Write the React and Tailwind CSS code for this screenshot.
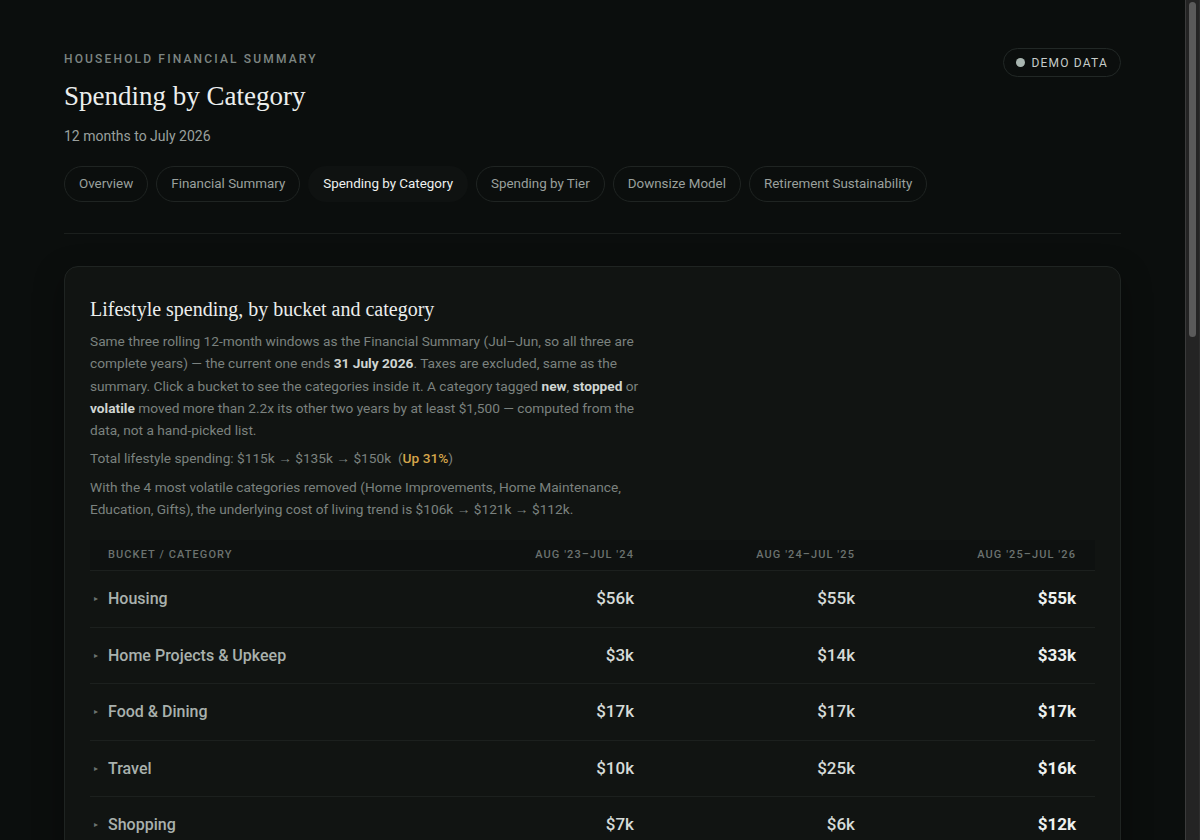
import { useState } from "react";

const tabs = [
  "Overview",
  "Financial Summary",
  "Spending by Category",
  "Spending by Tier",
  "Downsize Model",
  "Retirement Sustainability",
];

const buckets = [
  { name: "Housing", values: ["$56k", "$55k", "$55k"] },
  { name: "Home Projects & Upkeep", values: ["$3k", "$14k", "$33k"] },
  { name: "Food & Dining", values: ["$17k", "$17k", "$17k"] },
  { name: "Travel", values: ["$10k", "$25k", "$16k"] },
  { name: "Shopping", values: ["$7k", "$6k", "$12k"] },
  { name: "Transport", values: ["$8k", "$7k", "$7k"] },
  { name: "Health & Wellness", values: ["$5k", "$4k", "$3k"] },
  { name: "Kids & Education", values: ["$4k", "$3k", "$2k"] },
  { name: "Gifts & Giving", values: ["$2k", "$2k", "$3k"] },
  { name: "Subscriptions", values: ["$1k", "$1k", "$1k"] },
  { name: "Personal Care", values: ["$1k", "$1k", "$1k"] },
  { name: "Other", values: ["$1k", "$0k", "$0k"] },
];

const periods = ["Aug '23–Jul '24", "Aug '24–Jul '25", "Aug '25–Jul '26"];

function BucketRow({ bucket }) {
  const [open, setOpen] = useState(false);
  return (
    <div
      className="grid grid-cols-[1fr_221px_221px_221px] items-center h-[56.5px] border-t border-[#1c201e] cursor-pointer"
      onClick={() => setOpen(!open)}
    >
      <div className="flex items-center gap-2 pl-1">
        <span className="text-[8px] text-[#6b726f] w-[6px]">{open ? "▾" : "▸"}</span>
        <span className="text-[16px] font-medium text-[#a9b1ad]">{bucket.name}</span>
      </div>
      {bucket.values.map((v, i) => (
        <div
          key={i}
          className={
            i === 2
              ? "text-right pr-[19px] text-[17px] font-bold text-[#eef1ef]"
              : "text-right pr-[19px] text-[17px] font-medium text-[#d6dbd8]"
          }
        >
          {v}
        </div>
      ))}
    </div>
  );
}

export default function App() {
  const [active, setActive] = useState("Spending by Category");

  return (
    <div
      className="h-screen flex bg-[#0b0e0d] text-[#9aa09d]"
      style={{ fontFamily: "Roboto, 'Noto Sans', sans-serif" }}
    >
      <main className="flex-1 overflow-y-auto">
        <div className="px-16 pt-[50px] pb-24">
          <header className="flex justify-between items-start">
            <div>
              <div className="text-[12px] tracking-[0.18em] font-medium text-[#7d8582]">
                HOUSEHOLD FINANCIAL SUMMARY
              </div>
              <h1 className="mt-[10px] text-[27px] leading-[36px] text-[#eceeed] font-['Liberation_Serif',serif]">
                Spending by Category
              </h1>
              <div className="mt-[12px] text-[14px] text-[#9aa09d]">12 months to July 2026</div>
            </div>
            <div className="mt-[-2px] flex items-center gap-[6px] h-[29px] px-3 rounded-full border border-[#222826] text-[12px] tracking-[0.1em] text-[#c6ccc9]">
              <span className="w-[9px] h-[9px] rounded-full bg-[#a8b5b0]"></span>
              DEMO DATA
            </div>
          </header>

          <nav className="mt-[19px] flex gap-2">
            {tabs.map((t) =>
              t === active ? (
                <button
                  key={t}
                  className="h-[36px] px-[14px] rounded-full bg-[#0f1211] border border-transparent text-[13.4px] text-[#eef1ef]"
                >
                  {t}
                </button>
              ) : (
                <button
                  key={t}
                  onClick={() => setActive(t)}
                  className="h-[36px] px-[14px] rounded-full border border-[#1f2422] text-[13.4px] text-[#9aa09d]"
                >
                  {t}
                </button>
              ),
            )}
          </nav>

          <div className="mt-[31px] border-t border-[#1b1f1d]"></div>

          <section className="mt-[32px] rounded-[14px] border border-[#1f2422] bg-[#111412] px-[25px] pt-[28px] pb-[26px] shadow-[0_10px_30px_rgba(0,0,0,0.35)]">
            <h2 className="text-[20px] leading-[28px] text-[#eceeed] font-['Liberation_Serif',serif]">
              Lifestyle spending, by bucket and category
            </h2>
            <p className="mt-[7px] max-w-[570px] text-[13.7px] leading-[22.3px] text-[#7b827f]">
              Same three rolling 12-month windows as the Financial Summary (Jul–Jun, so all three are
              complete years) — the current one ends{" "}
              <b className="font-bold text-[#cfd4d1]">31 July 2026</b>. Taxes are excluded, same as the
              summary. Click a bucket to see the categories inside it. A category tagged{" "}
              <b className="font-bold text-[#cfd4d1]">new</b>,{" "}
              <b className="font-bold text-[#cfd4d1]">stopped</b> or{" "}
              <b className="font-bold text-[#cfd4d1]">volatile</b> moved more than 2.2x its other two
              years by at least $1,500 — computed from the data, not a hand-picked list.
            </p>
            <p className="mt-[6px] text-[13.7px] leading-[22.3px] text-[#7b827f]">
              Total lifestyle spending: $115k → $135k → $150k&nbsp; (
              <span className="font-medium text-[#d4a54a]">Up 31%</span>)
            </p>
            <p className="mt-[6px] max-w-[570px] text-[13.7px] leading-[22.3px] text-[#7b827f]">
              With the 4 most volatile categories removed (Home Improvements, Home Maintenance,
              Education, Gifts), the underlying cost of living trend is $106k → $121k → $112k.
            </p>

            <div className="mt-[20px]">
              <div className="grid grid-cols-[1fr_221px_221px_221px] items-center h-[30px] bg-[#0e1110] text-[11px] font-medium tracking-[0.1em] text-[#6b726f] uppercase">
                <div className="pl-[18px]">Bucket / Category</div>
                {periods.map((p) => (
                  <div key={p} className="text-right pr-[19px]">
                    {p}
                  </div>
                ))}
              </div>
              {buckets.map((b) => (
                <BucketRow key={b.name} bucket={b} />
              ))}
              <div className="grid grid-cols-[1fr_221px_221px_221px] items-center h-[56px] border-t border-[#2a302d]">
                <div className="pl-[18px] text-[16px] font-semibold text-[#d6dbd8]">Total</div>
                <div className="text-right pr-[19px] text-[17px] font-medium text-[#d6dbd8]">$115k</div>
                <div className="text-right pr-[19px] text-[17px] font-medium text-[#d6dbd8]">$135k</div>
                <div className="text-right pr-[19px] text-[17px] font-bold text-[#eef1ef]">$150k</div>
              </div>
            </div>
          </section>

          <section className="mt-[32px] rounded-[14px] border border-[#1f2422] bg-[#111412] px-[25px] pt-[28px] pb-[26px]">
            <h2 className="text-[20px] leading-[28px] text-[#eceeed] font-['Liberation_Serif',serif]">
              How the buckets are built
            </h2>
            <p className="mt-[7px] max-w-[570px] text-[13.7px] leading-[22.3px] text-[#7b827f]">
              Each transaction is mapped to one category, and each category belongs to one bucket.
              Transfers between accounts, refunds and reimbursements are netted out before totals are
              computed, so a returned purchase does not inflate the year it was bought in.
            </p>
            <p className="mt-[6px] max-w-[570px] text-[13.7px] leading-[22.3px] text-[#7b827f]">
              Figures are rounded to the nearest thousand; bucket totals may not add up exactly to the
              lifestyle total shown above.
            </p>
          </section>
        </div>
      </main>

      {/* page scrollbar, as the browser draws it */}
      <aside className="w-[15px] shrink-0 bg-[#242424] border-l border-[#3b3b3b] border-r border-r-[#2e2e2e] pt-[2px] px-[3px]">
        <div className="h-[335px] rounded-full bg-[#5a5a5a]"></div>
      </aside>
    </div>
  );
}
